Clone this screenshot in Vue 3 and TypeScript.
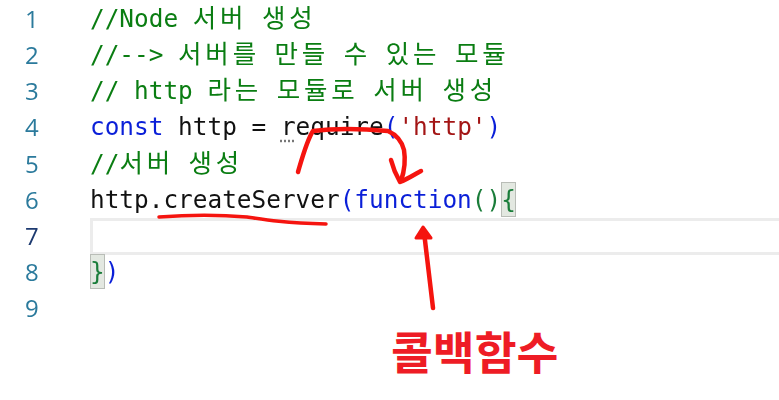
<script setup lang="ts">
interface Seg { t: string; c?: string }
const lines: Seg[][] = [
  [{ t: '//Node ', c: 'cm' }, { t: '서버', c: 'cm ko' }, { t: ' ', c: 'cm' }, { t: '생성', c: 'cm ko' }],
  [{ t: '//--> ', c: 'cm' }, { t: '서버를', c: 'cm ko' }, { t: ' ', c: 'cm' }, { t: '만들', c: 'cm ko' }, { t: ' ', c: 'cm' }, { t: '수', c: 'cm ko' }, { t: ' ', c: 'cm' }, { t: '있는', c: 'cm ko' }, { t: ' ', c: 'cm' }, { t: '모듈', c: 'cm ko' }],
  [{ t: '// http ', c: 'cm' }, { t: '라는', c: 'cm ko' }, { t: ' ', c: 'cm' }, { t: '모듈로', c: 'cm ko' }, { t: ' ', c: 'cm' }, { t: '서버', c: 'cm ko' }, { t: ' ', c: 'cm' }, { t: '생성', c: 'cm ko' }],
  [{ t: 'const', c: 'kw' }, { t: ' http = ' }, { t: 'r', c: 'dots' }, { t: 'equire' }, { t: '(', c: 'kw' }, { t: "'http'", c: 'str' }, { t: ')', c: 'kw' }],
  [{ t: '//', c: 'cm' }, { t: '서버', c: 'cm ko' }, { t: ' ', c: 'cm' }, { t: '생성', c: 'cm ko' }],
  [{ t: 'http.createServer' }, { t: '(function', c: 'kw' }, { t: '()', c: 'gr' }, { t: '{', c: 'gr br' }],
  [],
  [{ t: '}', c: 'gr br' }, { t: ')', c: 'kw' }],
  [],
]
</script>

<template>
  <div class="editor">
    <div class="smooth">
      <div v-for="(line, i) in lines" :key="i" class="row">
        <span class="num" :class="{ cur: i === 6 }">{{ i + 1 }}</span>
        <div class="code" :class="{ active: i === 6 }">
          <span v-for="(s, j) in line" :key="j" :class="s.c">{{ s.t }}</span>
        </div>
      </div>
    </div>
    <svg class="ink" width="779" height="400" viewBox="0 0 779 400" fill="none" stroke="#f5140f" stroke-linecap="round" stroke-linejoin="round">
      <path d="M298 172 C303 155 307 140 313 131 C335 128 367 129 388 131 C397 135 402 142 404 150 C406 162 404 172 401 181" stroke-width="4.5" />
      <path d="M391 160 C393 168 396 175 400 182 C408 179 415 174 421 171" stroke-width="4.5" />
      <path d="M159 217 C187 215 222 215 247 217 C266 220 284 223 326 224" stroke-width="3.5" />
      <path d="M433 308 L424 232" stroke-width="4.5" />
      <path d="M423 227 L416 238 L431 238 Z" fill="#f5140f" stroke-width="3" />
    </svg>
    <div class="label">콜백함수</div>
  </div>
</template>

<style>
html, body { margin: 0; background: #fff; }
</style>

<style scoped>
.editor {
  position: relative;
  width: 779px;
  height: 400px;
  overflow: hidden;
  background: #fff;
}
.smooth {
  display: flex;
  flex-direction: column;
  padding-top: 1px;
  filter: blur(0.35px);
}
.row {
  display: flex;
  height: 36.15px;
  font: 24.4px/36.15px "DejaVu Sans Mono", "Noto Sans CJK KR", monospace;
  color: #111;
}
.num {
  width: 90px;
  padding-left: 25px;
  box-sizing: border-box;
  color: #2b7a9c;
  font-family: "Open Sans", sans-serif;
  font-size: 24px;
}
.num.cur { color: #1d3a70; }
.code {
  flex: 1;
  white-space: pre;
  box-sizing: border-box;
}
.code.active {
  border: 3px solid #ececec;
  border-right: 0;
  height: 37px;
}
.cm { color: #0a7d12; }
.ko {
  display: inline-block;
  font-family: "Noto Sans CJK KR", sans-serif;
  font-size: 25.5px;
  line-height: 30px;
  letter-spacing: 3.8px;
}
.kw { color: #0a1fd8; }
.str { color: #a31515; }
.gr { color: #1a7d3a; }
.br {
  display: inline-block;
  width: 14.7px;
  height: 35px;
  vertical-align: top;
  background: #e3e8e1;
  outline: 1px solid #b9bdb7;
  outline-offset: -1px;
}
.dots {
  text-decoration: underline dotted #777;
  text-underline-offset: 5px;
}
.ink {
  position: absolute;
  left: 0;
  top: 0;
}
.label {
  position: absolute;
  left: 391px;
  top: 318px;
  font: 700 45.5px/64px "Noto Sans CJK KR", sans-serif;
  color: #ee1c25;
  white-space: nowrap;
}
</style>
